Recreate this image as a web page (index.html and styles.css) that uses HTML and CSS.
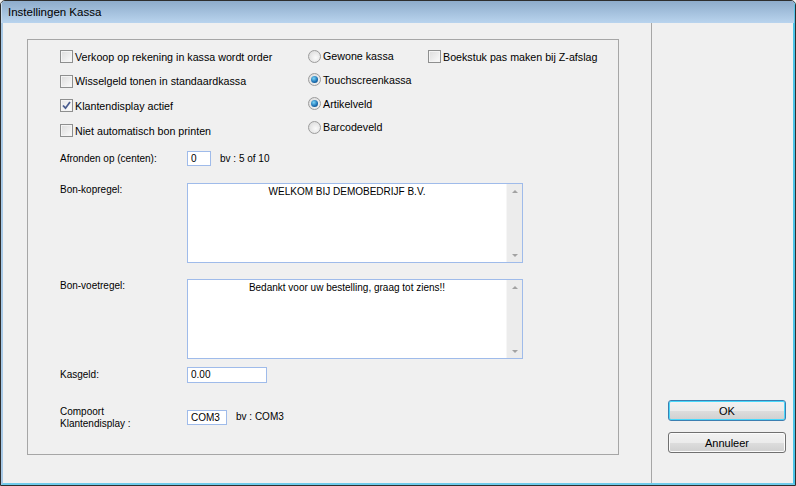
FILE: index.html
```html
<!DOCTYPE html>
<html lang="nl">
<head>
  <meta charset="UTF-8">
  <title>Instellingen Kassa</title>
  <link rel="stylesheet" href="styles.css">
</head>
<body>
  <div class="window">
    <div class="titlebar">Instellingen Kassa</div>

    <div class="dialog">
      <div class="main">
        <div class="group">

          <div class="options">
            <div class="opt-col opt-checks">
              <div class="check"><span class="box"></span>Verkoop op rekening in kassa wordt order</div>
              <div class="check"><span class="box"></span>Wisselgeld tonen in standaardkassa</div>
              <div class="check"><span class="box checked"><svg width="9" height="9" viewBox="0 0 9 9"><path d="M1 4.5 L3.5 7.2 L8 1" fill="none" stroke="#4a5d8f" stroke-width="1.8"/></svg></span>Klantendisplay actief</div>
              <div class="check"><span class="box"></span>Niet automatisch bon printen</div>
            </div>
            <div class="opt-col opt-radios">
              <div class="check"><span class="radio"></span>Gewone kassa</div>
              <div class="check"><span class="radio on"></span>Touchscreenkassa</div>
              <div class="check"><span class="radio on"></span>Artikelveld</div>
              <div class="check"><span class="radio"></span>Barcodeveld</div>
            </div>
            <div class="opt-col">
              <div class="check"><span class="box"></span>Boekstuk pas maken bij Z-afslag</div>
            </div>
          </div>

          <div class="fields">
            <div class="field row-round">
              <span class="label">Afronden op (centen):</span>
              <div class="control">
                <span class="input input-small">0</span>
                <span class="hint">bv : 5 of 10</span>
              </div>
            </div>

            <div class="field field-memo row-header">
              <span class="label">Bon-kopregel:</span>
              <div class="memo">
                <div class="memo-text">WELKOM BIJ DEMOBEDRIJF B.V.</div>
                <div class="memo-scroll"><span class="arrow up"></span><span class="arrow down"></span></div>
              </div>
            </div>

            <div class="field field-memo row-footer">
              <span class="label">Bon-voetregel:</span>
              <div class="memo">
                <div class="memo-text">Bedankt voor uw bestelling, graag tot ziens!!</div>
                <div class="memo-scroll"><span class="arrow up"></span><span class="arrow down"></span></div>
              </div>
            </div>

            <div class="field row-cash">
              <span class="label">Kasgeld:</span>
              <div class="control">
                <span class="input input-wide">0.00</span>
              </div>
            </div>

            <div class="field row-port">
              <span class="label">Compoort<br>Klantendisplay :</span>
              <div class="control">
                <span class="input input-port">COM3</span>
                <span class="hint">bv : COM3</span>
              </div>
            </div>
          </div>

        </div>
      </div>

      <div class="side">
        <button class="btn btn-default">OK</button>
        <button class="btn">Annuleer</button>
      </div>
    </div>
  </div>
</body>
</html>
```

FILE: styles.css
```css
* {
  box-sizing: border-box;
}
body {
  margin: 0;
  background-color: #f0f0f0;
  font-family: "Liberation Sans", Arial, sans-serif;
  color: #000;
}
.window {
  width: 796px;
  height: 486px;
  border: 1px solid #2e2e2e;
  border-radius: 5px 5px 0 0;
  overflow: hidden;
  display: flex;
  flex-direction: column;
}
.titlebar {
  height: 22px;
  padding-left: 6px;
  line-height: 22px;
  font-size: 11.5px;
  background: linear-gradient(#8eaccb, #b9d4ee);
  border-left: 1px solid #c9dcef;
  border-right: 1px solid #5ac6ea;
}
.dialog {
  flex: 1;
  display: flex;
  background-color: #f0f0f0;
  border-left: 2px solid #a8c9e6;
  border-right: 2px solid #4bc3e7;
  border-bottom: 2px solid #6ecbeb;
}
.main {
  width: 648px;
}
.group {
  width: 592px;
  height: 416px;
  margin: 16px 0 0 24px;
  border: 1px solid #a6a6a6;
  padding: 10px 0 0 32px;
}

/* check- en keuzerondjes */
.options {
  display: grid;
  grid-template-columns: 248px 120px auto;
}
.opt-col {
  display: flex;
  flex-direction: column;
}
.opt-checks {
  gap: 11.7px;
}
.opt-radios {
  gap: 10.8px;
  margin-top: -0.5px;
}
.check {
  display: flex;
  align-items: center;
  gap: 2px;
  height: 13px;
  font-size: 10.7px;
  white-space: nowrap;
}
.box {
  width: 13px;
  height: 13px;
  border: 1px solid #8e8f8f;
  background: linear-gradient(135deg, #dcdcdc, #fbfbfb);
  box-shadow: inset 0 0 0 1px #f4f4f4;
  display: flex;
  align-items: center;
  justify-content: center;
  flex-shrink: 0;
}
.box.checked {
  background: linear-gradient(135deg, #e6e6e6, #ffffff);
}
.radio {
  width: 13px;
  height: 13px;
  border-radius: 50%;
  border: 1px solid #9c9c9c;
  background: radial-gradient(circle at 60% 60%, #fafafa, #d6d6d6);
  flex-shrink: 0;
  position: relative;
}
.radio.on::after {
  content: "";
  position: absolute;
  left: 2px;
  top: 2px;
  width: 7px;
  height: 7px;
  border-radius: 50%;
  background: radial-gradient(circle at 40% 35%, #7ad6f8, #1a6db0 60%, #0c3a68);
}

/* velden */
.fields {
  display: flex;
  flex-direction: column;
}
.field {
  display: grid;
  grid-template-columns: 127px auto;
  align-items: center;
  font-size: 10px;
  line-height: 12px;
}
.field-memo {
  align-items: start;
}
.field-memo .label {
  margin-top: 1px;
}
.row-round {
  margin-top: 14px;
}
.row-header {
  margin-top: 17px;
}
.row-footer {
  margin-top: 16px;
}
.row-cash {
  margin-top: 8px;
}
.row-port {
  margin-top: 21px;
}
.row-port .label {
  margin-top: 2px;
}
.control {
  display: flex;
  align-items: center;
  gap: 9px;
}
.input {
  display: block;
  height: 15px;
  padding: 0 3px;
  border: 1px solid #9fbbea;
  background-color: #fff;
  line-height: 13px;
  font-size: 10px;
}
.input-small {
  width: 24px;
}
.input-wide {
  width: 80px;
  height: 16px;
  line-height: 14px;
}
.input-port {
  width: 40px;
}
.memo {
  display: flex;
  width: 336px;
  height: 80px;
  border: 1px solid #9fbbea;
  background-color: #fff;
}
.memo-text {
  flex: 1;
  text-align: center;
  padding-top: 2px;
}
.memo-scroll {
  width: 16px;
  background-color: #ececec;
  border-left: 1px solid #f6f6f6;
  display: flex;
  flex-direction: column;
  justify-content: space-between;
  align-items: center;
  padding: 6px 0 5px;
}
.arrow {
  width: 0;
  height: 0;
  border-left: 3.5px solid transparent;
  border-right: 3.5px solid transparent;
}
.arrow.up {
  border-bottom: 3px solid #a2a2a2;
}
.arrow.down {
  border-top: 3px solid #a2a2a2;
}

/* knoppen */
.side {
  flex: 1;
  border-left: 1px solid #a6a6a6;
  display: flex;
  flex-direction: column;
  justify-content: flex-end;
  gap: 11px;
  padding: 0 0 30px 16px;
}
.btn {
  width: 118px;
  height: 21px;
  padding: 0;
  border: 1px solid #707070;
  border-radius: 3px;
  background: linear-gradient(#f2f2f2 0%, #ebebeb 50%, #dddddd 51%, #cfcfcf 100%);
  box-shadow: inset 0 0 0 1px #fbfbfb;
  font-family: "Liberation Sans", Arial, sans-serif;
  font-size: 11px;
  color: #000;
}
.btn-default {
  border-color: #3c7fb1;
  box-shadow: inset 0 0 0 1px #48d8fb;
}
```
